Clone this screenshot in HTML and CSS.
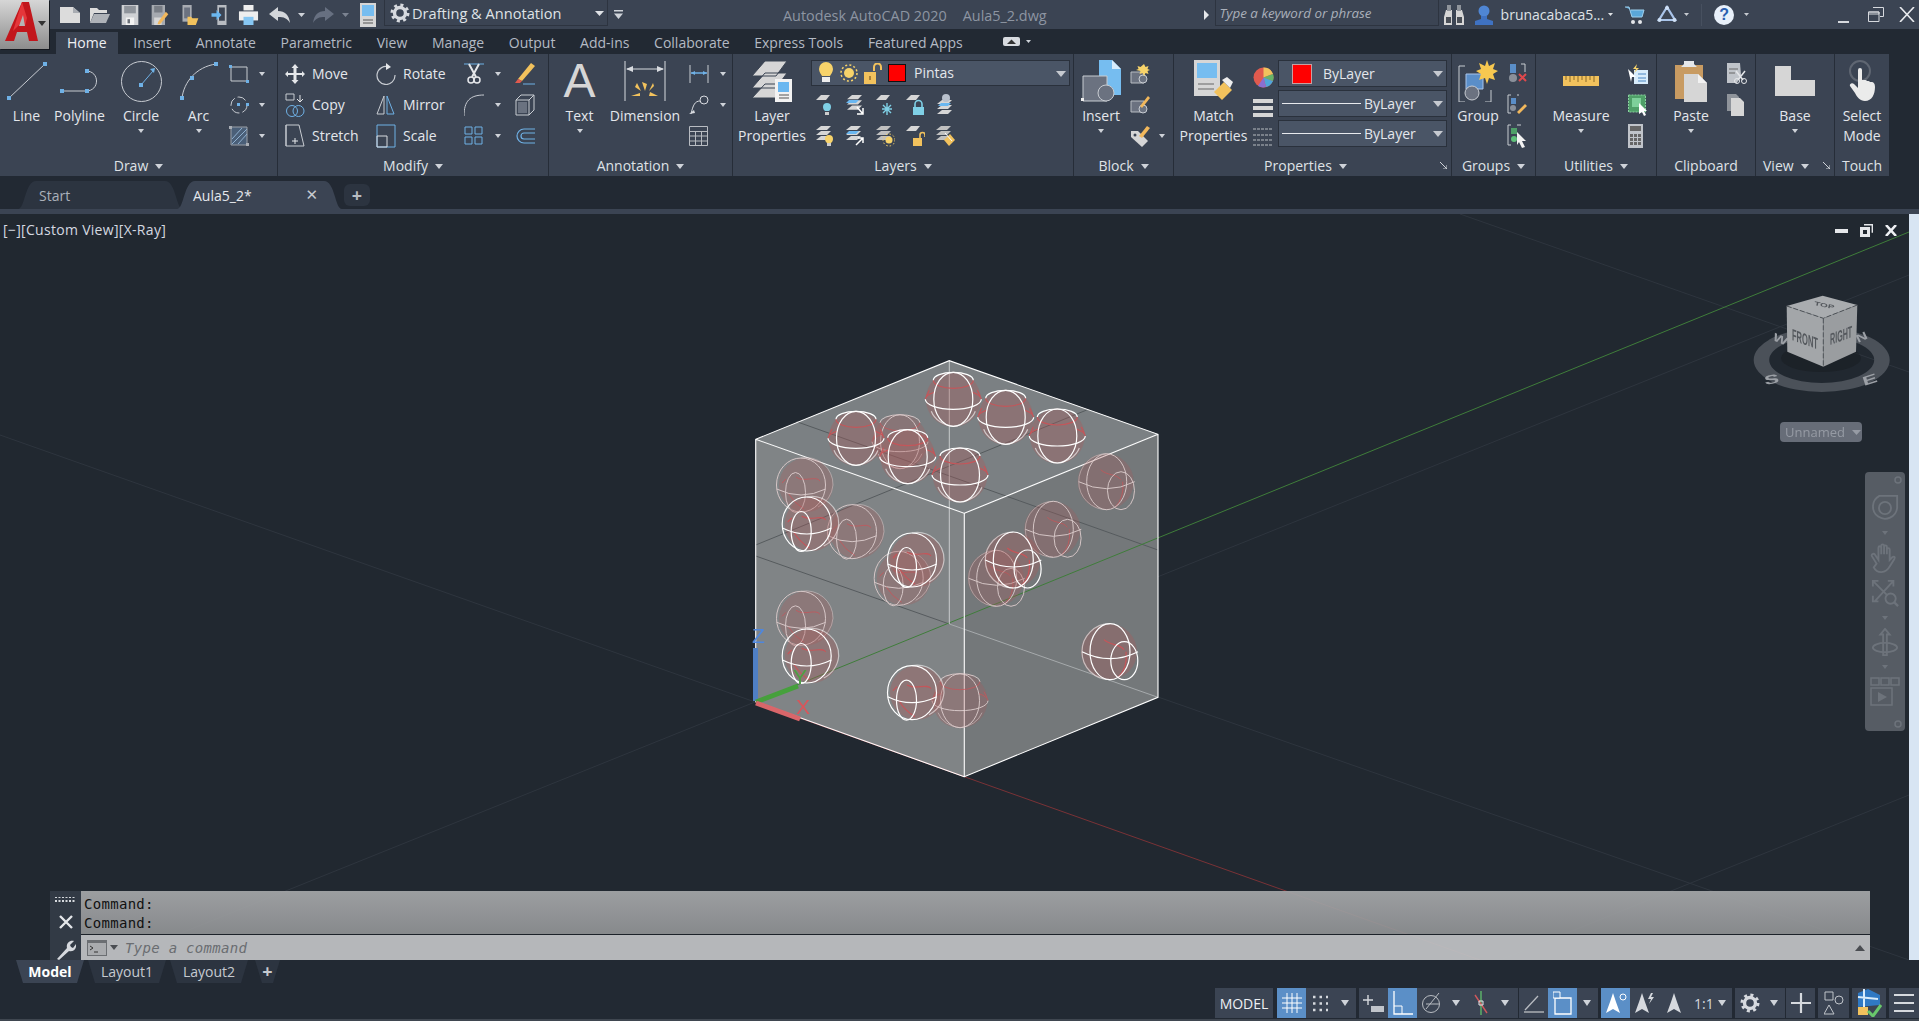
FILE: index.html
```html
<!DOCTYPE html>
<html lang="en">
<head>
    <meta charset="UTF-8">
    <title>Autodesk AutoCAD 2020 - Aula5_2.dwg</title>
    <link rel="stylesheet" href="styles.css">
</head>
<body>

    <svg class="defs" width="0" height="0">
        <defs>
            <g id="caret"><path d="M0 0h7l-3.5 4z" fill="#cfd3d9"/></g>
            <g id="gear"><circle cx="10" cy="10" r="5.5" fill="none" stroke="currentColor" stroke-width="3.4"/><circle cx="10" cy="10" r="8" fill="none" stroke="currentColor" stroke-width="3" stroke-dasharray="3 3.3"/></g>
            <g id="layer-sheet"><path d="M5 0h9l-4 5H0z"/></g>
            <g id="stack"><path d="M5 0h10l-4 4H0zM5 5h10l-4 4H0zM5 10h10l-4 4H0z"/></g>

            <g id="sph-top" fill="none">
                <circle r="27.5" fill="#aa5a5a" fill-opacity=".34" stroke="none"/>
                <path d="M-28 0A28 10 0 0 1 -19 -7M19 -7A28 10 0 0 1 28 0" stroke="#c4565a"/>
                <path d="M-20 -19A20 8 0 0 0 20 -19M-24 -9L-27 -3M24 -9L27 -3" stroke="#c4565a"/>
                <path d="M-28 0A28 10 0 0 0 28 0M-20 -19A20 8 0 0 1 20 -19"/>
                <ellipse rx="19.5" ry="27"/>
                <path d="M-22 12A26 22 0 0 0 0 27 26 22 0 0 0 22 12" opacity=".6"/>
            </g>
            <g id="sph-left" fill="none">
                <circle cx="2" r="27" fill="#aa5a5a" fill-opacity=".34" stroke="none"/>
                <path d="M-18 -6L-22 -2M-8 -8C0 -2 12 -10 16 -4M-16 8Q-10 18 0 24" stroke="#c4565a"/>
                <ellipse cx="-3" rx="24.5" ry="27"/>
                <ellipse cx="-8.5" cy="7.500" rx="10" ry="20"/>
                <path d="M-27.300 4Q-3 16 21.700 4"/>
                <path d="M-3 -27A27 27 0 0 1 29 0 27 27 0 0 1 14 22" opacity=".55"/>
            </g>
            <g id="sph-right" fill="none">
                <circle cx="-1" r="28" fill="#aa5a5a" fill-opacity=".34" stroke="none"/>
                <path d="M-6 -12C0 -6 10 -8 14 -2M8 26Q18 16 16 0" stroke="#c4565a"/>
                <ellipse rx="20" ry="28"/>
                <ellipse cx="14.300" cy="9" rx="13.500" ry="19"/>
                <path d="M-28 0Q0 14 28 0"/>
                <path d="M0 -28A28 28 0 0 0 -28 0 28 28 0 0 0 0 28" opacity=".55"/>
            </g>
        </defs>
    </svg>

    <a class="app-btn" href="#">
        <svg width="36" height="42" viewBox="0 0 36 42"><path d="M18 1h7l9 39h-9l-2-9H13l-3 9H1z" fill="#c2161c"/><path d="M18 1l-9 29 8-8 4 3 2-8z" fill="#e5363a"/><path d="M19 14l-4 11h6z" fill="#b5b5b5"/></svg>
        <span class="app-caret"></span>
    </a>

    <header class="titlebar">
        <div class="qa">
            <svg width="20" height="20" viewBox="0 0 20 20"><path d="M0 2h13l7 6v10H0z" fill="#dcdcdc"/><path d="M13 2v6h7" fill="#a9adb3"/></svg>
            <svg width="20" height="20" viewBox="0 0 20 20"><path d="M0 3h7l2 2h8v3H4L0 18z" fill="#dcdcdc"/><path d="M4 9h16l-4 9H0z" fill="#aeb2b8"/></svg>
            <svg width="20" height="20" viewBox="0 0 20 24"><path d="M0 0h20v24H0z" fill="#cfd1d4"/><path d="M3 1h14v9H3z" fill="#8f949b"/><path d="M5 15h10v9H5z" fill="#f2f2f2"/><path d="M7 17h3v5H7z" fill="#6b7078"/></svg>
            <svg width="20" height="20" viewBox="0 0 20 24"><path d="M0 0h16v24H0z" fill="#a6aab0"/><path d="M3 1h10v8H3z" fill="#787d85"/><path d="M3 15h9v9H3z" fill="#d6d6d6"/><path d="M8 20L17 8l3 3-10 12H7z" fill="#f2b85c"/></svg>
            <svg width="20" height="20" viewBox="0 0 20 24"><path d="M1 0h11v20H1z" fill="#a8acb2"/><path d="M3 3h7v13H3z" fill="#6b7280"/><path d="M7 14h4l2 2h7l-3 8H7z" fill="#f2c25d"/></svg>
            <svg width="18" height="20" viewBox="0 0 18 24"><path d="M7 0h11v24H7zM9 3v16h7V3z" fill="#b8bcc2"/><path d="M0 10h6V6l6 6-6 6v-4H0z" fill="#6ab7f0"/></svg>
            <svg width="21" height="20" viewBox="0 0 21 22"><path d="M5 0h11v6H5z" fill="#eee"/><path d="M0 7h21v10H0z" fill="#eee"/><path d="M5 13h11v9H5z" fill="#86c6f2"/></svg>
            <svg width="21" height="18" viewBox="0 0 21 18"><path d="M0 8l9-7v4c7 0 11 4 12 12-3-5-6-6-12-6v4z" fill="#d3d6da"/></svg>
            <svg class="tiny" width="7" height="4"><use href="#caret"/></svg>
            <svg class="redo" width="21" height="18" viewBox="0 0 21 18"><path d="M21 8l-9-7v4C5 5 1 9 0 17c3-5 6-6 12-6v4z" fill="#677081"/></svg>
            <svg class="tiny" width="7" height="4"><path d="M0 0h7l-3.500 4z" fill="#7b8391"/></svg>
            <svg class="plot" width="16" height="24" viewBox="0 0 16 24"><path d="M0 0h16v24H0z" fill="#d6d6d6"/><path d="M2 2h12v11H2z" fill="#76bdf0"/><path d="M3 17h10M3 20h10" stroke="#555"/></svg>
        </div>
        <div class="workspace">
            <svg class="ws-gear" width="20" height="20" viewBox="0 0 20 20"><use href="#gear"/></svg>
            <span>Drafting &amp; Annotation</span>
            <svg class="ws-caret" width="9" height="5"><path d="M0 0h9L4.500 5z" fill="#dfe2e6"/></svg>
        </div>
        <svg class="ws-more" width="9" height="9"><path d="M0 0h9v1.500H0z M0 3.500h9L4.500 9z" fill="#cfd3d9"/></svg>
        <div class="app-title"><span>Autodesk AutoCAD 2020</span><span>Aula5_2.dwg</span></div>
        <svg class="search-arrow" width="5" height="10"><path d="M0 0l5 5-5 5z" fill="#e5e7ea"/></svg>
        <div class="search">Type a keyword or phrase</div>
        <div class="user-tools">
            <svg width="20" height="20" viewBox="0 0 20 20"><path d="M2 5h6v15H0v-8zM12 5h6l2 7v8h-8z" fill="#d6d6d6"/><path d="M3 0h4v6H3zM13 0h4v6h-4z" fill="#8f949b"/><path d="M2 12h5v6H2zM13 12h5v6h-5z" fill="#4a4f57"/></svg>
            <svg class="user-ico" width="20" height="20" viewBox="0 0 20 20"><circle cx="10" cy="6" r="5.500" fill="#4f86d4"/><path d="M7 11h6v3l6 2v4H1v-4l6-2z" fill="#3f72c2"/></svg>
            <span class="user-name">brunacabaca5...</span>
            <svg class="caret" width="5" height="3"><path d="M0 0h5L2.500 3z" fill="#dfe2e6"/></svg>
            <svg class="cart" width="20" height="20" viewBox="0 0 20 20"><path d="M0 2h4l3 10h10l2-7H6" fill="#5aa7d9" stroke="#9fd0ee"/><circle cx="8" cy="17" r="2" fill="#e5e7ea"/><circle cx="15" cy="17" r="2" fill="#e5e7ea"/></svg>
            <svg class="a360" width="20" height="20" viewBox="0 0 20 20"><path d="M10 2L2 15h16z" fill="none" stroke="#a9c4ea" stroke-width="2.200"/><circle cx="10" cy="3" r="2" fill="#cfe0f5"/><circle cx="2.500" cy="15" r="2" fill="#cfe0f5"/><circle cx="17.500" cy="15" r="2" fill="#cfe0f5"/></svg>
            <svg class="caret" width="5" height="3"><path d="M0 0h5L2.500 3z" fill="#c6cad0"/></svg>
            <span class="tool-sep"></span>
            <span class="help">?</span>
            <svg class="caret" width="5" height="3"><path d="M0 0h5L2.500 3z" fill="#c6cad0"/></svg>
        </div>
        <div class="win-btns">
            <svg class="win-min" width="11" height="16"><path d="M0 14h11v2H0z" fill="#d6d9de"/></svg>
            <svg width="16" height="15" viewBox="0 0 16 15"><path d="M5 .5h10.500v9H12M.5 5h10.500v9.500H.5z M.5 5h10.500v2H.5z" fill="none" stroke="#d6d9de"/></svg>
            <svg width="16" height="15" viewBox="0 0 16 15"><path d="M1 0l14 15M15 0L1 15" stroke="#e8eaee" stroke-width="1.600"/></svg>
        </div>
    </header>

    <nav class="ribbon-tabs">
        <a class="active" href="#">Home</a>
        <a href="#">Insert</a>
        <a href="#">Annotate</a>
        <a href="#">Parametric</a>
        <a href="#">View</a>
        <a href="#">Manage</a>
        <a href="#">Output</a>
        <a href="#">Add-ins</a>
        <a href="#">Collaborate</a>
        <a href="#">Express Tools</a>
        <a href="#">Featured Apps</a>
        <span class="tab-opt">
            <svg width="17" height="9"><rect width="17" height="9" rx="2" fill="#d8dbe0"/><path d="M4 7l4.500-4.500L13 7z" fill="#333"/></svg>
            <svg width="5" height="3"><path d="M0 0h5L2.500 3z" fill="#cfd3d9"/></svg>
        </span>
    </nav>

    <section class="ribbon">

        <!-- Draw -->
        <div class="panel p-draw">
            <div class="panel-body">
                <div class="big">
                    <div class="big-ico"><svg width="40" height="38" viewBox="0 0 40 38"><path d="M2 36L38 2" stroke="#c8ccd2"/><path d="M0 34h4v4H0zM36 0h4v4h-4z" fill="#6fb1e6"/></svg></div>
                    <span>Line</span>
                </div>
                <div class="big">
                    <div class="big-ico"><svg width="40" height="24" viewBox="0 0 40 24"><path d="M2 22h26M26 2c14 0 14 20 0 20" fill="none" stroke="#c8ccd2"/><path d="M0 20h4v4H0zM25 20h4v4h-4zM25 0h4v4h-4z" fill="#6fb1e6"/></svg></div>
                    <span>Polyline</span>
                </div>
                <div class="big">
                    <div class="big-ico"><svg width="41" height="41" viewBox="0 0 41 41"><circle cx="20.500" cy="20.500" r="20" fill="none" stroke="#c8ccd2"/><path d="M20 24L32 10" stroke="#6fb1e6"/><path d="M18 22h4v4h-4zM29 8l5-1-1 5z" fill="#6fb1e6"/></svg></div>
                    <span>Circle</span>
                    <i class="arr"></i>
                </div>
                <div class="big">
                    <div class="big-ico"><svg width="38" height="38" viewBox="0 0 38 38"><path d="M2 36C4 20 16 5 36 2" fill="none" stroke="#c8ccd2"/><path d="M0 34h4v4H0zM10 14h4v4h-4zM34 0h4v4h-4z" fill="#6fb1e6"/></svg></div>
                    <span>Arc</span>
                    <i class="arr"></i>
                </div>
                <div class="rows">
                    <div class="tool"><svg width="20" height="18" viewBox="0 0 20 18"><path d="M2 2h16v14H2z" fill="none" stroke="#c8ccd2"/><path d="M0 0h3v3H0zM17 15h3v3h-3z" fill="#6fb1e6"/></svg><i class="arr sm"></i></div>
                    <div class="tool"><svg width="20" height="20" viewBox="0 0 20 20"><circle cx="10" cy="10" r="8" fill="none" stroke="#c8ccd2" stroke-dasharray="9 3"/><path d="M8 8h3v3H8zM17 8h3v3h-3z" fill="#6fb1e6"/></svg><i class="arr sm"></i></div>
                    <div class="tool"><svg width="20" height="20" viewBox="0 0 20 20"><path d="M2 1h16v18H2z" fill="#4a5f78" stroke="#9aa0a8"/><path d="M3 13L13 2M3 18L18 3M9 18L18 8" stroke="#8fb0d0"/><path d="M0 0h3v3H0zM17 17h3v3h-3z" fill="#a9aeb5"/></svg><i class="arr sm"></i></div>
                </div>
            </div>
            <div class="panel-title">Draw <i class="arr title-arr"></i></div>
        </div>

        <!-- Modify -->
        <div class="panel p-modify">
            <div class="panel-body">
                <div class="tool"><svg width="20" height="22" viewBox="0 0 20 22"><path d="M10 1l3.500 4H11.500v5H17V8l3 3-3 3v-2h-5.500v5H13.500L10 21l-3.500-4H8.500v-5H3v2l-3-3 3-3v2h5.500V5H6.500z" fill="#e5e7ea"/></svg><span>Move</span></div>
                <div class="tool"><svg width="20" height="22" viewBox="0 0 20 22"><path d="M13 4A9 9 0 1 0 19 12" fill="none" stroke="#c8ccd2" stroke-width="1.200"/><path d="M10 0l5 4-5 3z" fill="#e5e7ea"/></svg><span>Rotate</span></div>
                <div class="tool"><svg width="20" height="22" viewBox="0 0 20 22"><path d="M0 1h20" stroke="#6fb1e6"/><path d="M5 1l7 13M15 1L8 14" stroke="#e5e7ea" stroke-width="2"/><circle cx="7" cy="17" r="3" fill="none" stroke="#e5e7ea" stroke-width="1.500"/><circle cx="13" cy="17" r="3" fill="none" stroke="#e5e7ea" stroke-width="1.500"/></svg><i class="arr sm"></i></div>
                <div class="tool"><svg width="20" height="24" viewBox="0 0 20 24"><path d="M3 17L16 1l4 3L7 19z" fill="#f2c25d"/><path d="M3 17l4 2-2 2H0z" fill="#e05a4e"/><path d="M8 22h12" stroke="#6fb1e6"/></svg></div>

                <div class="tool"><svg width="20" height="24" viewBox="0 0 20 24"><path d="M1 1h8v6H1z" fill="none" stroke="#c8ccd2"/><path d="M15 2v6M12 6l3 3 3-3" fill="none" stroke="#e5e7ea"/><circle cx="7" cy="18" r="5.500" fill="none" stroke="#6fb1e6"/><circle cx="13.500" cy="18" r="5.500" fill="none" stroke="#6fb1e6"/></svg><span>Copy</span></div>
                <div class="tool"><svg width="20" height="24" viewBox="0 0 20 24"><path d="M8 3L1 21h7z" fill="none" stroke="#c8ccd2"/><path d="M11 3l7 18h-7z" fill="none" stroke="#6fb1e6"/></svg><span>Mirror</span></div>
                <div class="tool"><svg width="20" height="24" viewBox="0 0 20 24"><path d="M0 23C0 8 6 2 20 2" fill="none" stroke="#c8ccd2"/></svg><i class="arr sm"></i></div>
                <div class="tool"><svg width="20" height="22" viewBox="0 0 20 22"><path d="M1 6h13v15H1zM1 6l5-5h13v15l-5 5M14 6l5-5" fill="none" stroke="#c8ccd2"/><path d="M3 8h9v11H3z" fill="#6a7280"/></svg></div>

                <div class="tool"><svg width="20" height="24" viewBox="0 0 20 24"><path d="M1 1h13l5 21H1zM1 1v21" fill="none" stroke="#c8ccd2"/><path d="M7 17h6M10 14v6" stroke="#e5e7ea"/></svg><span>Stretch</span></div>
                <div class="tool"><svg width="20" height="24" viewBox="0 0 20 24"><path d="M1 1h18v22H1z" fill="none" stroke="#6fb1e6"/><path d="M1 12h10v11H1z" fill="none" stroke="#d8dbe0"/></svg><span>Scale</span></div>
                <div class="tool"><svg width="20" height="20" viewBox="0 0 20 20"><path d="M1 1h7v7H1zM11 1h7v7h-7zM1 11h7v7H1zM11 11h7v7h-7z" fill="none" stroke="#6fb1e6"/></svg><i class="arr sm"></i></div>
                <div class="tool"><svg width="20" height="18" viewBox="0 0 20 18"><path d="M20 2H9a7 7 0 0 0 0 14h11M20 6H9a3 3 0 0 0 0 6h11" fill="none" stroke="#6fb1e6" stroke-width="1.200"/></svg></div>
            </div>
            <div class="panel-title">Modify <i class="arr title-arr"></i></div>
        </div>

        <!-- Annotation -->
        <div class="panel p-anno">
            <div class="panel-body">
                <div class="big">
                    <div class="big-ico"><span class="text-a">A</span></div>
                    <span>Text</span>
                    <i class="arr"></i>
                </div>
                <div class="big">
                    <div class="big-ico"><svg width="42" height="40" viewBox="0 0 42 40"><path d="M1 0v40M41 0v40M3 8h36" stroke="#d8dbe0"/><path d="M2 8l7-3v6zM40 8l-7-3v6z" fill="#d8dbe0"/><path d="M16 35h-9l9-3zM25 35h9l-8-4zM21 30l-3-9 5 2zM13 22l4 8-6-4zM29 22l-4 8 5-5z" fill="#f2c25d"/></svg></div>
                    <span>Dimension</span>
                </div>
                <div class="rows">
                    <div class="tool"><svg width="20" height="20" viewBox="0 0 20 20"><path d="M1 1v18M19 1v18" stroke="#c8ccd2"/><path d="M2 9h16" stroke="#6fb1e6" stroke-width="1.500"/><path d="M2 9l4-2v4zM18 9l-4-2v4z" fill="#6fb1e6"/></svg><i class="arr sm"></i></div>
                    <div class="tool"><svg width="20" height="20" viewBox="0 0 20 20"><circle cx="15" cy="5" r="4" fill="none" stroke="#d8dbe0"/><path d="M11 6C6 6 4 10 2 19" fill="none" stroke="#d8dbe0"/><path d="M0 19l5-4 1 3z" fill="#d8dbe0"/></svg><i class="arr sm"></i></div>
                    <div class="tool"><svg width="19" height="20" viewBox="0 0 19 20"><path d="M.5.5h18v19H.5z M.5 5.500h18M.5 10h18M.5 15h18M6.500 5.500v14M12.500 5.500v14" fill="none" stroke="#b8bcc2"/></svg></div>
                </div>
            </div>
            <div class="panel-title">Annotation <i class="arr title-arr"></i></div>
        </div>

        <!-- Layers -->
        <div class="panel p-layers">
            <div class="panel-body">
                <div class="big two">
                    <div class="big-ico"><svg width="40" height="42" viewBox="0 0 40 42"><path d="M13 1h22L24 16H0z M13 13h22L24 28H0zM13 24h14v14H0z" fill="#d6d6d6" stroke="#3b4453"/><path d="M23 19h17v23H23z" fill="#f2f2f2"/><path d="M26 22h11v10H26z" fill="#6ab7f0"/><path d="M27 35h10M27 38h10" stroke="#555"/></svg></div>
                    <span>Layer</span>
                    <span>Properties</span>
                </div>
                <div class="layer-col">
                    <div class="combo layer-combo">
                        <svg width="14" height="22" viewBox="0 0 14 22"><path d="M7 0a7 7 0 0 1 7 7c0 3-2 5-3 7H3C2 12 0 10 0 7a7 7 0 0 1 7-7z" fill="#f7d36a"/><path d="M3 15h8v5H3z" fill="#eee"/></svg>
                        <svg width="18" height="18" viewBox="0 0 18 18"><circle cx="9" cy="9" r="5" fill="#f7d36a"/><circle cx="9" cy="9" r="8" fill="none" stroke="#f7d36a" stroke-width="1.500" stroke-dasharray="2 2.200"/></svg>
                        <svg width="18" height="21" viewBox="0 0 18 21"><path d="M0 9h12v12H0z" fill="#f2c25d"/><path d="M10 8V4a3.500 3.500 0 0 1 7 0v3" fill="none" stroke="#f2c25d" stroke-width="2"/><path d="M5 13h2v4H5z" fill="#a8813a"/></svg>
                        <span class="swatch red"></span>
                        <span class="combo-text">Pintas</span>
                        <i class="combo-arr"></i>
                    </div>
                    <div class="icon-row">
                        <svg width="20" height="20" viewBox="0 0 20 20"><g fill="#d6d6d6"><use href="#layer-sheet" transform="translate(1 0)"/></g><path d="M12 8a4 4 0 0 1 4 4c0 2-1 3-2 4h-4c-1-1-2-2-2-4a4 4 0 0 1 4-4z" fill="#7fd0e6"/><path d="M10 17h4v3h-4z" fill="#ccc"/></svg>
                        <svg width="20" height="22" viewBox="0 0 20 22"><g fill="#d6d6d6"><use href="#stack" transform="translate(2 1) scale(1 1.050)"/></g><path d="M4 6h10l-3 3H1z" fill="#6ab7f0"/><path d="M12 13l6 7M18 14v6h-6" fill="none" stroke="#fff" stroke-width="1.500"/></svg>
                        <svg width="20" height="20" viewBox="0 0 20 20"><g fill="#d6d6d6"><use href="#layer-sheet" transform="translate(1 0)"/></g><path d="M12 8v12M7 14h10M8 10l8 8M16 10l-8 8" stroke="#7fd0e6" stroke-width="1.400"/></svg>
                        <svg width="20" height="20" viewBox="0 0 20 20"><g fill="#d6d6d6"><use href="#layer-sheet" transform="translate(1 0)"/></g><path d="M8 12h11v8H8z" fill="#7fd0e6"/><path d="M10 12V9a3.500 3.500 0 0 1 7 0v3" fill="none" stroke="#7fd0e6" stroke-width="1.600"/></svg>
                        <svg width="20" height="21" viewBox="0 0 20 21"><g fill="#d6d6d6"><use href="#stack" transform="translate(2 6)"/></g><circle cx="11" cy="4" r="4" fill="#b8c0cc"/><path d="M6 9h10l-3 3H3z" fill="#6ab7f0"/></svg>
                    </div>
                    <div class="icon-row">
                        <svg width="20" height="20" viewBox="0 0 20 20"><g fill="#d6d6d6"><use href="#stack" transform="translate(1 0)"/></g><path d="M14 9a4 4 0 0 1 4 4c0 2-1 3-2 4h-4c-1-1-2-2-2-4a4 4 0 0 1 4-4z" fill="#f7d36a"/><path d="M12 17h4v3h-4z" fill="#ccc"/></svg>
                        <svg width="20" height="22" viewBox="0 0 20 22"><g fill="#d6d6d6"><use href="#stack" transform="translate(1 1)"/></g><path d="M4 6h10l-3 3H1z" fill="#6ab7f0"/><path d="M11 20l7-7M13 13h5v5" fill="none" stroke="#fff" stroke-width="1.500"/></svg>
                        <svg width="20" height="22" viewBox="0 0 20 22"><g fill="#c0c0c0"><use href="#stack" transform="translate(1 1)"/></g><circle cx="14" cy="15" r="3.500" fill="#f7d36a"/><circle cx="14" cy="15" r="6" fill="none" stroke="#f7d36a" stroke-dasharray="1.500 2"/></svg>
                        <svg width="20" height="20" viewBox="0 0 20 20"><g fill="#d6d6d6"><use href="#layer-sheet" transform="translate(1 0)"/></g><path d="M8 12h9v8H8z" fill="#f2c25d"/><path d="M15 12V9a2.500 2.500 0 0 1 5 0v2" fill="none" stroke="#f2c25d" stroke-width="1.600"/></svg>
                        <svg width="20" height="22" viewBox="0 0 20 22"><g fill="#c0c0c0"><use href="#stack" transform="translate(1 1)"/></g><path d="M9 15l6-6 5 6-6 6z" fill="#f2c25d"/><path d="M10 8l7 8" stroke="#fff"/></svg>
                    </div>
                </div>
            </div>
            <div class="panel-title">Layers <i class="arr title-arr"></i></div>
        </div>

        <!-- Block -->
        <div class="panel p-block">
            <div class="panel-body">
                <div class="big">
                    <div class="big-ico"><svg width="40" height="42" viewBox="0 0 40 42"><path d="M18 0h13l9 9v26H18z" fill="#76bdf0"/><path d="M31 0l9 9h-9z" fill="#d8ecfb"/><path d="M2 16h24v25H2z" fill="#6b7280" stroke="#c8ccd2"/><circle cx="25" cy="33" r="8" fill="#6b7280" stroke="#c8ccd2"/><path d="M0 38h3v3H0z" fill="#eee"/></svg></div>
                    <span>Insert</span>
                    <i class="arr"></i>
                </div>
                <div class="rows block-rows">
                    <div class="tool"><svg width="20" height="20" viewBox="0 0 20 20"><path d="M1 8h13v11H1z" fill="#6b7280" stroke="#b8bcc2"/><circle cx="13" cy="15" r="4" fill="#6b7280" stroke="#c8ccd2"/><path d="M14 0l1.500 3 3-1-1 3 2.500 1-2.500 1 1 3-3-1-1.500 3-1.500-3-3 1 1-3L6 6l2.500-1-1-3 3 1z" fill="#f7d36a"/></svg></div>
                    <div class="tool"><svg width="20" height="20" viewBox="0 0 20 20"><path d="M1 6h13v11H1z" fill="#6b7280" stroke="#b8bcc2"/><circle cx="13" cy="14" r="4" fill="#6b7280" stroke="#c8ccd2"/><path d="M10 11L18 1l2 2-8 10z" fill="#f2b85c"/></svg></div>
                    <div class="tool"><svg width="20" height="24" viewBox="0 0 20 24"><path d="M1 7h7l10 10-6 6L1 13z" fill="#d6d6d6"/><circle cx="5" cy="11" r="1.500" fill="#3b4453"/><path d="M9 12L17 2l3 2-8 10z" fill="#f2b85c"/></svg><i class="arr sm"></i></div>
                </div>
            </div>
            <div class="panel-title">Block <i class="arr title-arr"></i></div>
        </div>

        <!-- Properties -->
        <div class="panel p-props">
            <div class="panel-body">
                <div class="big two">
                    <div class="big-ico"><svg width="40" height="42" viewBox="0 0 40 42"><path d="M0 0h26v36H0z" fill="#d6d6d6"/><path d="M3 3h20v15H3z" fill="#76bdf0"/><path d="M4 24h16M4 29h16" stroke="#666"/><path d="M20 32l10-10 8 8-10 10z" fill="#f2c25d"/><path d="M28 20l5-3 6 5-3 6z" fill="#eee"/></svg></div>
                    <span>Match</span>
                    <span>Properties</span>
                </div>
                <div class="prop-icons">
                    <svg width="21" height="21" viewBox="0 0 21 21"><circle cx="10.500" cy="10.500" r="10" fill="#e05a4e"/><path d="M10.500 10.500L20 7A10 10 0 0 0 10.500.5z" fill="#f2c25d"/><path d="M10.500 10.500L20 14a10 10 0 0 0 0-7z" fill="#67b468"/><path d="M10.500 10.500L13 20a10 10 0 0 0 7-6z" fill="#4fa6d9"/><path d="M10.500 10.500L5 19a10 10 0 0 0 8 1z" fill="#8a6fd1"/></svg>
                    <svg width="20" height="18" viewBox="0 0 20 18"><path d="M0 0h20v4H0zM0 7h20v4H0zM0 14h20v4H0z" fill="#d6d6d6"/></svg>
                    <svg width="20" height="18" viewBox="0 0 20 18"><path d="M0 1h20M0 7h20M0 12h20M0 17h20" stroke="#b8bcc2" stroke-dasharray="3 1"/></svg>
                </div>
                <div class="prop-combos">
                    <div class="combo"><span class="swatch red wide"></span><span class="combo-text">ByLayer</span><i class="combo-arr"></i></div>
                    <div class="combo"><span class="combo-line"></span><span class="combo-text">ByLayer</span><i class="combo-arr"></i></div>
                    <div class="combo"><span class="combo-line"></span><span class="combo-text">ByLayer</span><i class="combo-arr"></i></div>
                </div>
            </div>
            <div class="panel-title">Properties <i class="arr title-arr"></i><svg class="launch" width="7" height="7"><path d="M0 0l7 7M3 7h4V3" fill="none" stroke="#cfd3d9"/></svg></div>
        </div>

        <!-- Groups -->
        <div class="panel p-groups">
            <div class="panel-body">
                <div class="big">
                    <div class="big-ico"><svg width="40" height="42" viewBox="0 0 40 42"><path d="M7 6H1v36h6M27 42h6V30" fill="none" stroke="#c8ccd2"/><path d="M8 14h17v15H8z" fill="#5a8ec8" stroke="#a9c4ea"/><circle cx="14" cy="33" r="7" fill="#6b7280" stroke="#c8ccd2"/><path d="M29 0l2 6 6-3-2 6 5 2-5 3 2 6-6-2-2 6-2-6-6 2 2-6-5-3 5-2-2-6 6 3z" fill="#f7c850"/></svg></div>
                    <span>Group</span>
                </div>
                <div class="rows">
                    <div class="tool"><svg width="20" height="22" viewBox="0 0 20 22"><path d="M3 1h6v9H3z" fill="#5a8ec8"/><circle cx="6" cy="15" r="4" fill="#8a909a"/><path d="M12 11l7 7M19 11l-7 7" stroke="#e0484c" stroke-width="2"/><path d="M14 1h4v8" fill="none" stroke="#c8ccd2"/></svg></div>
                    <div class="tool"><svg width="20" height="22" viewBox="0 0 20 22"><path d="M4 1H1v18h3M12 1h-2" fill="none" stroke="#c8ccd2"/><path d="M4 4h5v6H4z" fill="#5a8ec8"/><circle cx="6" cy="14" r="3" fill="#8a909a"/><path d="M10 18l8-8 2 2-8 8z" fill="#f2b85c"/></svg></div>
                    <div class="tool"><svg width="20" height="24" viewBox="0 0 20 24"><path d="M4 1H1v20h3M10 1h4" fill="none" stroke="#c8ccd2"/><path d="M4 4h6v6H4z" fill="#4fa068"/><circle cx="7" cy="15" r="3" fill="#5fc07a"/><path d="M10 8l9 9-4 0 3 6-3 1-3-6-2 3z" fill="#f2f2f2"/></svg></div>
                </div>
            </div>
            <div class="panel-title">Groups <i class="arr title-arr"></i></div>
        </div>

        <!-- Utilities -->
        <div class="panel p-utils">
            <div class="panel-body">
                <div class="big">
                    <div class="big-ico"><svg width="36" height="10" viewBox="0 0 36 10"><path d="M0 0h36v10H0z" fill="#f2c25d"/><path d="M3 0v4M7 0v6M11 0v4M15 0v6M19 0v4M23 0v6M27 0v4M31 0v6" stroke="#8a6a2a"/></svg></div>
                    <span>Measure</span>
                    <i class="arr"></i>
                </div>
                <div class="rows">
                    <div class="tool"><svg width="20" height="20" viewBox="0 0 20 20"><path d="M6 6h14v14H6z" fill="#d8ecfb"/><path d="M10 10h8M10 14h8M10 17h8" stroke="#4a86c2"/><path d="M0 5l8 8-4 0-1 5z" fill="#fff"/><path d="M9 0L5 5h3L6 9l5-5H8z" fill="#f7d36a"/></svg></div>
                    <div class="tool"><svg width="20" height="22" viewBox="0 0 20 22"><path d="M.5 1h17v17H.5z" fill="#4fa068" stroke="#8ad0a0" stroke-dasharray="2 1"/><path d="M4 4h9v9H4z" fill="#7ed09a"/><path d="M11 9l8 8-3 0 2 4-2 1-2-4-3 2z" fill="#fff"/></svg></div>
                    <div class="tool"><svg width="15" height="24" viewBox="0 0 15 24"><path d="M0 0h15v24H0z" fill="#c0c4ca"/><path d="M2 2h11v5H2z" fill="#666"/><path d="M2 10h3v3H2zM6 10h3v3H6zM10 10h3v3h-3zM2 14h3v3H2zM6 14h3v3H6zM10 14h3v3h-3zM2 18h3v3H2zM6 18h3v3H6zM10 18h3v3h-3z" fill="#666"/></svg></div>
                </div>
            </div>
            <div class="panel-title">Utilities <i class="arr title-arr"></i></div>
        </div>

        <!-- Clipboard -->
        <div class="panel p-clip">
            <div class="panel-body">
                <div class="big">
                    <div class="big-ico"><svg width="32" height="42" viewBox="0 0 32 42"><path d="M0 5h28v34H0z" fill="#c89b62"/><path d="M9 1h10v3l3 3H6l3-3z" fill="#e5e7ea"/><path d="M9 14h14l9 9v19H9z" fill="#d6d6d6"/><path d="M23 14l9 9h-9z" fill="#f2f2f2"/></svg></div>
                    <span>Paste</span>
                    <i class="arr"></i>
                </div>
                <div class="rows">
                    <div class="tool"><svg width="20" height="22" viewBox="0 0 20 22"><path d="M0 0h13l1 12-4 8H0z" fill="#c0c4ca"/><path d="M2 6h9M2 10h6" stroke="#666"/><path d="M9 8l7 9M18 8l-7 9" stroke="#e5e7ea" stroke-width="1.500"/><circle cx="10" cy="18" r="2.500" fill="none" stroke="#e5e7ea"/><circle cx="17" cy="18" r="2.500" fill="none" stroke="#e5e7ea"/></svg></div>
                    <div class="tool"><svg width="17" height="22" viewBox="0 0 17 22"><path d="M0 0h9l3 3v14H0z" fill="#8f949b"/><path d="M4 4h9l4 4v14H4z" fill="#d6d6d6"/></svg></div>
                </div>
            </div>
            <div class="panel-title">Clipboard</div>
        </div>

        <!-- View -->
        <div class="panel p-view">
            <div class="panel-body">
                <div class="big">
                    <div class="big-ico"><svg width="40" height="30" viewBox="0 0 40 30"><path d="M0 0h16v14h24v16H0z" fill="#d6d6d6"/></svg></div>
                    <span>Base</span>
                    <i class="arr"></i>
                </div>
            </div>
            <div class="panel-title">View <i class="arr title-arr"></i><svg class="launch" width="7" height="7"><path d="M0 0l7 7M3 7h4V3" fill="none" stroke="#cfd3d9"/></svg></div>
        </div>

        <!-- Touch -->
        <div class="panel p-touch">
            <div class="panel-body">
                <div class="big two">
                    <div class="big-ico"><svg width="26" height="42" viewBox="0 0 26 42"><circle cx="11" cy="11" r="10" fill="none" stroke="#5f6672" stroke-width="2"/><path d="M9 10a2 2 0 0 1 4 0v10l3 0a2 2 0 0 1 2 1l1 0a2 2 0 0 1 2 1l1 0c3 0 4 2 4 5 0 7-3 14-10 14-5 0-8-4-10-8L1 26c-1-2 2-4 4-2l4 4z" fill="#ebebeb"/></svg></div>
                    <span>Select</span>
                    <span>Mode</span>
                </div>
            </div>
            <div class="panel-title">Touch</div>
        </div>
    </section>

    <div class="doc-tabs">
        <a class="doc-tab" href="#">Start</a>
        <a class="doc-tab current" href="#">Aula5_2*<span class="doc-close">&#10005;</span></a>
        <a class="doc-add" href="#">+</a>
    </div>
    <div class="doc-band"></div>

    <main class="workarea">
        <div class="canvas">
            <svg class="drawing" width="1909" height="746" viewBox="0 214 1909 746">
                <!-- background grid -->
                <g stroke="#2e353e" fill="none">
                    <path d="M0 435L755 702"/>
                    <path d="M1460 214L1909 372"/>
                    <path d="M755 702L0 1006"/>
                    <path d="M1100 600L1909 275"/>
                    <path d="M1158 697L1909 960"/>
                    <path d="M1500 960L1909 795"/>
                </g>
                <!-- cube -->
                <polygon points="949.300,360.700 1158,434.300 964.300,513.300 755.700,439.300" fill="#7b8083"/>
                <polygon points="755.700,439.300 964.300,513.300 964.300,776.700 755.700,701.700" fill="#808486"/>
                <polygon points="964.300,513.300 1158,434.300 1158,697.300 964.300,776.700" fill="#74787a"/>
                <g stroke="#565b5e" fill="none">
                    <path d="M796.700 421.700L1158 550"/>
                    <path d="M755.700 545L1086.700 410"/>
                    <path d="M755.700 556L949.300 624"/>
                </g>
                <path d="M949.300 624L1158 697.300" stroke="#a6aaac"/>
                <!-- axes -->
                <path d="M755 702L1909 232" stroke="#3f7d3a"/>
                <path d="M755 702L964.300 776.700" stroke="#b0555a"/>
                <path d="M964.300 776.700L1480 960" stroke="#7a3236"/>
                <!-- edges -->
                <path d="M949.300 360.700V624" stroke="#c8cbcc"/>
                <path d="M755.700 701.700V439.300L949.300 360.700 1158 434.300V697.300L964.300 776.700V513.300L755.700 439.300M964.300 513.300L1158 434.300M964.300 776.700L755.700 701.700" fill="none" stroke="#fff" stroke-width="1.100"/>
                <!-- spheres, back ones first -->
                <g class="sph-back">
                    <use href="#sph-top" x="900" y="441.700"/>
                    <use href="#sph-left" x="804" y="485"/>
                    <use href="#sph-left" x="855" y="531.700"/>
                    <use href="#sph-left" x="901.700" y="578.300"/>
                    <use href="#sph-left" x="804" y="618.300"/>
                    <use href="#sph-top" x="960" y="700.700"/>
                    <use href="#sph-right" x="996.700" y="578.300"/>
                    <use href="#sph-right" x="1053.300" y="529.300"/>
                    <use href="#sph-right" x="1106.700" y="481.700"/>
                </g>
                <g class="sph-front">
                    <use href="#sph-top" x="953.300" y="399.300"/>
                    <use href="#sph-top" x="1005.700" y="417.300"/>
                    <use href="#sph-top" x="1057.300" y="436"/>
                    <use href="#sph-top" x="856" y="438.300"/>
                    <use href="#sph-top" x="907.700" y="456.700"/>
                    <use href="#sph-top" x="960" y="475"/>
                    <use href="#sph-left" x="809.700" y="524"/>
                    <use href="#sph-left" x="915" y="560"/>
                    <use href="#sph-left" x="809.700" y="656"/>
                    <use href="#sph-left" x="915" y="692.700"/>
                    <use href="#sph-right" x="1013.300" y="560"/>
                    <use href="#sph-right" x="1110" y="651.700"/>
                </g>
                <!-- UCS icon -->
                <path d="M755.500 701V648" stroke="#4f7fc4" stroke-width="5"/>
                <path d="M756 702L798 686" stroke="#46a03c" stroke-width="5"/>
                <path d="M756 703L800 719" stroke="#d9666a" stroke-width="5"/>
                <text class="ucs z" x="752" y="643">Z</text>
                <text class="ucs y" x="793" y="684">Y</text>
                <text class="ucs x" x="796" y="714">X</text>
                <!-- view cube -->
                <path d="M1753.700 360a68 32 0 0 1 136 0a68 32 0 0 1 -136 0zM1769.200 360a52.500 23 0 0 0 105 0a52.500 23 0 0 0 -105 0z" fill="#4b5159"/>
                <ellipse cx="1821" cy="358" rx="40" ry="14" fill="#171b20" opacity=".5"/>
                <text class="compass" transform="translate(1765 385) rotate(-10) scale(1.400 .8)">S</text>
                <text class="compass" transform="translate(1864 386) rotate(-18) scale(1.400 .8)">E</text>
                <text class="compass" transform="translate(1772 340) rotate(22) scale(1 .7)">W</text>
                <text class="compass" transform="translate(1858 343) rotate(-25) scale(1 .7)">N</text>
                <polygon points="1822.700,295.700 1857.300,305 1823.300,318.300 1786.700,306" fill="#a9acaf"/>
                <polygon points="1786.700,306 1823.300,318.300 1823.300,366.700 1787.300,351.700" fill="#a3a6a9"/>
                <polygon points="1823.300,318.300 1857.300,305 1856,351.700 1823.300,366.700" fill="#9a9da0"/>
                <path d="M1786.700 306L1823.300 318.300 1857.300 305M1823.300 318.300V366.700" fill="none" stroke="#50555a" stroke-dasharray="5 2"/>
                <text class="vc-face" transform="translate(1792 340) skewY(20) scale(.58 1.250)">FRONT</text>
                <text class="vc-face" transform="translate(1830 345) skewY(-20) scale(.55 1.250)">RIGHT</text>
                <text class="vc-top" transform="translate(1814 305) rotate(12) scale(1 .55)">TOP</text>
            </svg>

            <div class="view-label">[&minus;][Custom View][X-Ray]</div>

            <div class="view-btns">
                <svg width="13" height="6"><path d="M0 1h13v4H0z" fill="#e5e7ea"/></svg>
                <svg width="13" height="13" viewBox="0 0 13 13"><path d="M4 .7h8.300v8" fill="none" stroke="#e5e7ea" stroke-width="1.400"/><path d="M0 3h10v10H0zM3 6v4h4V6z" fill="#e5e7ea" fill-rule="evenodd"/></svg>
                <svg width="12" height="11" viewBox="0 0 12 11"><path d="M1 0l10 11M11 0L1 11" stroke="#eef0f3" stroke-width="2.600"/></svg>
            </div>

            <div class="view-name">Unnamed <svg width="9" height="5"><path d="M0 0h9L4.500 5z" fill="#969ba4"/></svg></div>

            <div class="navbar">
                <svg class="nav-dot" width="8" height="8"><circle cx="4" cy="4" r="3" fill="none" stroke="#6d737b" stroke-width="1.500"/></svg>
                <svg class="nav-first" width="28" height="28" viewBox="0 0 30 30"><path d="M9 2h19v13A13 13 0 1 1 9 2z" fill="none" stroke="#6d737b" stroke-width="2"/><circle cx="15" cy="15" r="6.500" fill="none" stroke="#6d737b" stroke-width="2"/></svg>
                <i class="nav-arr"></i>
                <svg width="30" height="30" viewBox="0 0 30 32"><path d="M6 22L1 14c-1-2 2-3 3-2l4 6V5c0-2 3-2 3 0v7-9c0-2 3-2 3 0v9-8c0-2 3-2 3 0v8-5c0-2 3-2 3 0v11l3-3c2-1 3 0 2 2l-5 8c-2 4-4 6-9 6s-7-3-8-5z" fill="none" stroke="#6d737b" stroke-width="2"/></svg>
                <svg class="nav-zoom" width="28" height="28" viewBox="0 0 30 30"><path d="M2 2l19 19M24 2L4 24M2 8V2h6M18 2h6v6M2 18v6h6" fill="none" stroke="#6d737b" stroke-width="2"/><circle cx="21" cy="21" r="5.500" fill="#565c64" stroke="#6d737b" stroke-width="2"/><path d="M25 25l4 4" stroke="#6d737b" stroke-width="2.500"/></svg>
                <i class="nav-arr"></i>
                <svg width="28" height="28" viewBox="0 0 30 30"><path d="M15 1l5 6h-3v22h-4V7h-3z" fill="none" stroke="#6d737b" stroke-width="2"/><ellipse cx="15" cy="21" rx="13" ry="5" fill="none" stroke="#6d737b" stroke-width="2"/></svg>
                <i class="nav-arr"></i>
                <svg width="30" height="30" viewBox="0 0 30 30"><path d="M1 1h8v7H1zM11 1h8v7h-8zM21 1h8v7h-8zM1 11h21v17H1z" fill="none" stroke="#6d737b" stroke-width="1.500"/><path d="M8 15l9 5-9 5z" fill="#6d737b"/></svg>
                <svg class="nav-dot" width="8" height="8"><circle cx="4" cy="4" r="3" fill="none" stroke="#6d737b" stroke-width="1.500"/></svg>
            </div>

            <div class="cmd">
                <div class="cmd-side">
                    <svg width="21" height="7"><path d="M0 0h21M0 4h21" stroke="#d6d9de" stroke-width="2" stroke-dasharray="2 1.500"/></svg>
                    <svg width="14" height="14"><path d="M1 1l12 12M13 1L1 13" stroke="#e5e7ea" stroke-width="2.400"/></svg>
                    <svg width="20" height="20" viewBox="0 0 20 20"><path d="M1 19L11 8c-1-4 2-8 7-7l-4 4 1 2 2 1 3-4c1 5-3 8-7 7L3 20z" fill="#d6d9de"/></svg>
                </div>
                <div class="cmd-main">
                    <div class="cmd-hist">
                        <div>Command:</div>
                        <div>Command:</div>
                    </div>
                    <div class="cmd-input">
                        <svg width="20" height="16" viewBox="0 0 20 16"><path d="M0 0h20v16H0z" fill="#6b6e72"/><path d="M1 3h18v12H1z" fill="#a9abae"/><path d="M3 6l3 2-3 2M7 12h4" fill="none" stroke="#333"/></svg>
                        <svg class="cmd-caret" width="8" height="5"><path d="M0 0h8L4 5z" fill="#4a4d52"/></svg>
                        <span>Type a command</span>
                        <svg class="cmd-up" width="10" height="6"><path d="M5 0l5 6H0z" fill="#4a4d52"/></svg>
                    </div>
                </div>
            </div>
        </div>
        <div class="strip"></div>
    </main>

    <div class="layout-tabs">
        <a class="active" href="#">Model</a>
        <a href="#">Layout1</a>
        <a href="#">Layout2</a>
        <a class="add" href="#">+</a>
    </div>

    <footer class="status">
        <div class="st-group g-model"><span class="model-txt">MODEL</span></div>

        <div class="st-group g-grid">
            <span class="st on"><svg width="20" height="20" viewBox="0 0 20 20"><path d="M0 5h20M0 10h20M0 15h20M5 0v20M10 0v20M15 0v20" stroke="#fff"/></svg></span>
            <span class="st"><svg width="17" height="17" viewBox="0 0 17 17"><path d="M1 2h15M1 8.500h15M1 15h15" stroke="#d6d9de" stroke-width="2.500" stroke-dasharray="2.500 4"/></svg></span>
            <i class="st-arr"></i>
        </div>

        <div class="st-group g-draft">
            <span class="st"><svg width="22" height="20" viewBox="0 0 22 20"><path d="M5 2v10M0 7h10" stroke="#d6d9de" stroke-width="1.400"/><path d="M8 13h13v6H8z" fill="#c0c4ca"/></svg></span>
            <span class="st on"><svg width="20" height="24" viewBox="0 0 20 24"><path d="M1 0v23h19" fill="none" stroke="#fff" stroke-width="1.300"/><path d="M1 15h8v8" fill="none" stroke="#fff"/></svg></span>
            <span class="st"><svg width="20" height="22" viewBox="0 0 20 22"><circle cx="9" cy="12" r="8.500" fill="none" stroke="#b8bcc2"/><path d="M4 17L17 1M4 12h13" stroke="#b8bcc2"/></svg></span>
            <i class="st-arr"></i>
            <span class="st st-gap"><svg width="14" height="24" viewBox="0 0 14 24"><path d="M7 0v24" stroke="#5fb86a" stroke-width="1.400"/><path d="M1 4l12 18" stroke="#d0585c" stroke-width="1.400"/><path d="M5 10h4v4H5z" fill="none" stroke="#e5e7ea"/></svg></span>
            <i class="st-arr"></i>
        </div>

        <div class="st-group g-sel">
            <span class="st narrow"><svg width="20" height="20" viewBox="0 0 20 20"><path d="M1 17L14 3" stroke="#b8bcc2" stroke-width="1.300"/><path d="M0 18h20v2H0z" fill="#8f949b"/></svg></span>
            <span class="st on"><svg width="20" height="24" viewBox="0 0 20 24"><path d="M2 7h16v16H2z" fill="none" stroke="#fff" stroke-width="1.300"/><path d="M0 1h7v6H0z" fill="#5b8fc7" stroke="#fff"/></svg></span>
            <i class="st-arr"></i>
        </div>

        <div class="st-group g-anno">
            <span class="st on"><svg width="24" height="22" viewBox="0 0 24 22"><path d="M9 1l3 9 4 11-7-4-7 4 4-11z" fill="#fff"/><circle cx="19" cy="5" r="3" fill="none" stroke="#fff"/></svg></span>
            <span class="st"><svg width="22" height="22" viewBox="0 0 22 22"><path d="M8 1l3 9 4 11-7-4-7 4 4-11z" fill="#d6d9de"/><path d="M17 1l-3 6h3l-2 5 5-7h-3l2-4z" fill="#d6d9de"/></svg></span>
            <span class="st"><svg class="plain" width="16" height="22" viewBox="0 0 16 22"><path d="M8 1l3 9 4 11-7-4-7 4 4-11z" fill="#d6d9de"/></svg></span>
            <span class="scale">1:1<i class="st-arr tight"></i></span>
        </div>

        <div class="st-group g-gear">
            <span class="st gear-ico"><svg width="20" height="20" viewBox="0 0 20 20"><use href="#gear"/></svg></span>
            <i class="st-arr"></i>
        </div>
        <div class="st-group g-plus"><svg width="20" height="20" viewBox="0 0 20 20"><path d="M10 0v20M0 10h20" stroke="#d6d9de" stroke-width="2.200"/></svg></div>
        <div class="st-group g-shapes"><svg width="20" height="24" viewBox="0 0 20 24"><path d="M1 1h8v8H1zM5 14l5 9H0z" fill="none" stroke="#c0c4ca"/><circle cx="15" cy="9" r="4" fill="none" stroke="#c0c4ca"/></svg></div>
        <div class="st-group g-iso"><svg width="26" height="28" viewBox="0 0 26 28"><path d="M2 4l10-4 12 6v10L2 18z" fill="#2f79c4"/><path d="M8 0v18M2 8l20 2" stroke="#d8ecfb" stroke-width="2"/><path d="M2 18h10v8H2z" fill="#f2c25d"/><path d="M12 22l5 5 8-11" fill="none" stroke="#69c76c" stroke-width="3"/></svg></div>
        <div class="st-group g-menu"><svg width="20" height="20" viewBox="0 0 20 20"><path d="M0 2h20M0 10h20M0 18h20" stroke="#d6d9de" stroke-width="2.200"/></svg></div>
    </footer>

</body>
</html>
```

FILE: styles.css
```css
* {
    box-sizing: border-box;
}
html, body {
    margin: 0;
    padding: 0;
    height: 100%;
}
body {
    position: relative;
    display: flex;
    flex-direction: column;
    height: 1021px;
    overflow: hidden;
    background-color: #222933;
    color: #e4e7ec;
    font-family: "Open Sans", "Noto Sans", sans-serif;
    font-size: 14px;
}
a {
    color: inherit;
    text-decoration: none;
}
svg {
    display: block;
    flex: none;
}
.defs {
    position: absolute;
}

/* application button */
.app-btn {
    position: absolute;
    left: 0;
    top: 0;
    z-index: 5;
    display: block;
    width: 49px;
    height: 49px;
    padding: 1px 0 0 4px;
    background: linear-gradient(#d6d6d6, #8d8d8d);
    box-shadow: 1px 1px 0 #15191f;
}
.app-caret {
    position: absolute;
    right: 3px;
    top: 21px;
    border-left: 4px solid transparent;
    border-right: 4px solid transparent;
    border-top: 5px solid #333;
}

/* title bar */
.titlebar {
    display: flex;
    align-items: center;
    flex: none;
    height: 29px;
    padding-left: 60px;
    background-color: #3b4453;
}
.qa {
    display: flex;
    align-items: center;
    gap: 10px;
}
.qa .tiny {
    margin-left: -2px;
}
.qa .redo {
    margin-left: -2px;
}
.qa .plot {
    margin-left: 1px;
}
.workspace {
    display: flex;
    align-items: center;
    width: 224px;
    height: 26px;
    margin: -3px 0 0 8px;
    padding: 1px 0 0 5px;
    border: 1px solid #2d3440;
    border-top: 0;
    color: #dfe2e6;
    font-size: 14.600px;
}
.ws-gear {
    color: #d6d9de;
    margin-right: 2px;
}
.ws-caret {
    margin-left: auto;
    margin-right: 3px;
}
.ws-more {
    margin-left: 6px;
}
.app-title {
    display: flex;
    gap: 16px;
    margin-left: 160px;
    padding-top: 1px;
    color: #8d95a2;
    font-size: 14.400px;
}
.search-arrow {
    margin-left: 157px;
}
.search {
    width: 224px;
    height: 26px;
    margin: -3px 0 0 6px;
    padding: 4px 0 0 4px;
    border: 1px solid #2d3440;
    border-top: 0;
    color: #aab0ba;
    font-size: 13.400px;
    font-style: italic;
}
.user-tools {
    display: flex;
    align-items: center;
    margin-left: 5px;
}
.user-ico {
    margin-left: 10px;
}
.user-name {
    margin-left: 7px;
    color: #dfe2e6;
}
.caret {
    margin-left: 4px;
}
.cart {
    margin-left: 12px;
}
.a360 {
    margin-left: 12px;
}
.a360 + .caret {
    margin-left: 7px;
}
.tool-sep {
    width: 1px;
    height: 22px;
    margin: 0 12px;
    background-color: #47505f;
}
.help {
    width: 20px;
    height: 20px;
    border-radius: 50%;
    background-color: #e8f0fa;
    color: #2a5fb0;
    font-family: "Liberation Sans", sans-serif;
    font-size: 16px;
    font-weight: bold;
    line-height: 20px;
    text-align: center;
}
.help + .caret {
    margin-left: 10px;
}
.win-btns {
    display: flex;
    align-items: center;
    gap: 15px;
    margin-left: auto;
    padding-right: 4px;
}
.win-min {
    margin-right: 4px;
}

/* ribbon tabs */
.ribbon-tabs {
    display: flex;
    align-items: flex-end;
    flex: none;
    gap: 24.700px;
    height: 25px;
    padding-left: 67px;
    color: #b4bac4;
}
.ribbon-tabs a {
    height: 22px;
    line-height: 21px;
}
.ribbon-tabs a.active {
    margin: 0 -9px 0 -11px;
    padding: 0 11px;
    background-color: #3b4453;
    color: #eef0f3;
}
.tab-opt {
    display: flex;
    align-items: center;
    gap: 6px;
    height: 22px;
    margin-left: 16px;
    padding-bottom: 4px;
}

/* ribbon */
.ribbon {
    display: flex;
    flex: none;
    height: 122px;
}
.panel {
    display: flex;
    flex-direction: column;
    background-color: #3b4453;
    border-right: 1px solid #262d38;
}
.panel-body {
    display: grid;
    flex: none;
    height: 96px;
    padding-top: 4px;
    line-height: 20px;
}
.panel-title {
    position: relative;
    display: flex;
    align-items: center;
    justify-content: center;
    gap: 7px;
    height: 26px;
    padding-top: 5px;
    color: #dfe2e6;
}
.p-props .panel-title {
    padding-right: 14px;
}
.launch {
    position: absolute;
    right: 4px;
    top: 12px;
}
.big {
    display: flex;
    flex-direction: column;
    align-items: center;
    padding-top: 2px;
    white-space: nowrap;
}
.big-ico {
    display: flex;
    align-items: center;
    justify-content: center;
    height: 42px;
    margin-bottom: 4px;
}
.arr {
    display: block;
    margin-top: 3px;
    border-left: 3.500px solid transparent;
    border-right: 3.500px solid transparent;
    border-top: 4px solid #cfd3d9;
}
.arr.sm {
    margin: 0;
}
.title-arr {
    margin: 2px 0 0;
    border-left-width: 4.500px;
    border-right-width: 4.500px;
    border-top-width: 5px;
}
.rows {
    display: grid;
    grid-auto-rows: 31px;
}
.tool {
    display: flex;
    align-items: center;
    gap: 6px;
    white-space: nowrap;
}
.text-a {
    color: #d6d6d6;
    font-family: "Liberation Sans", sans-serif;
    font-size: 48px;
    line-height: 42px;
}

/* panel widths and their columns */
.p-draw {
    width: 278px;
}
.p-draw .panel-body {
    grid-template-columns: 53px 53px 70px 45px 1fr;
}
.p-draw .rows {
    padding-left: 8px;
}
.p-draw .tool {
    gap: 10px;
}
.p-modify {
    width: 271px;
}
.p-modify .panel-body {
    grid-template-columns: 91px 88px 51px 1fr;
    grid-auto-rows: 31px;
    padding-left: 7px;
}
.p-modify .tool {
    gap: 7px;
}
.p-modify .tool .arr {
    margin-left: 4px;
}
.p-anno {
    width: 184px;
}
.p-anno .panel-body {
    grid-template-columns: 61px 70px 1fr;
}
.p-anno .rows {
    padding-left: 9px;
}
.p-anno .tool {
    gap: 11px;
}
.p-layers {
    width: 341px;
}
.p-layers .panel-body {
    grid-template-columns: 78px 259px;
}
.layer-col {
    padding-top: 2px;
}
.combo {
    position: relative;
    display: flex;
    align-items: center;
    height: 27px;
    background-color: #4a5566;
    border: 1px solid #2a313c;
}
.layer-combo {
    height: 26px;
    gap: 6px;
    padding-left: 7px;
}
.layer-combo svg:nth-child(2) {
    margin-left: 1px;
}
.swatch {
    display: block;
    width: 18px;
    height: 18px;
    border: 1px solid #111;
}
.swatch.red {
    background-color: #ff0000;
}
.swatch.wide {
    width: 20px;
    height: 20px;
    margin-left: 13px;
    border-color: #c9a0a0;
}
.combo-text {
    margin-left: 2px;
}
.combo-arr {
    position: absolute;
    right: 3px;
    top: 10px;
    border-left: 5px solid transparent;
    border-right: 5px solid transparent;
    border-top: 6px solid #c6cad0;
}
.icon-row {
    display: flex;
    align-items: center;
    gap: 10px;
    height: 31px;
    padding-left: 4px;
}
.icon-row:nth-child(2) {
    margin-top: 3px;
}
.p-block {
    width: 100px;
}
.p-block .panel-body {
    grid-template-columns: 54px 1fr;
}
.block-rows {
    padding-left: 2px;
}
.block-rows .tool {
    gap: 9px;
}
.p-props {
    width: 278px;
}
.p-props .panel-body {
    grid-template-columns: 79px 25px 169px;
}
.prop-icons {
    display: flex;
    flex-direction: column;
    gap: 11px;
    padding-top: 9px;
}
.prop-combos {
    display: flex;
    flex-direction: column;
    gap: 3px;
    padding-top: 2px;
}
.prop-combos .combo-text {
    margin-left: 11px;
}
.prop-combos .combo:nth-child(n+2) .combo-text {
    margin-left: 3px;
}
.combo-line {
    width: 79px;
    height: 1px;
    margin-left: 3px;
    background-color: #e8eaee;
}
.p-groups {
    width: 84px;
}
.p-groups .panel-body {
    grid-template-columns: 52px 1fr;
}
.p-groups .rows {
    padding-left: 3px;
}
.p-utils {
    width: 121px;
}
.p-utils .panel-body {
    grid-template-columns: 90px 1fr;
}
.p-utils .rows {
    padding-left: 2px;
}
.p-clip {
    width: 99px;
}
.p-clip .panel-body {
    grid-template-columns: 68px 1fr;
}
.p-clip .rows {
    padding-left: 2px;
}
.p-view {
    width: 79px;
}
.p-view .panel-title {
    justify-content: flex-start;
    padding-left: 7px;
}
.p-touch {
    width: 54px;
    border-right: 0;
}

/* document tabs */
.doc-tabs {
    display: flex;
    align-items: flex-end;
    flex: none;
    height: 33px;
    padding-left: 18px;
    gap: 0;
}
.doc-tab {
    position: relative;
    width: 165px;
    height: 28px;
    margin-right: -6px;
    padding-left: 21px;
    background-color: #2c3440;
    clip-path: path("M0 28C7 28 7 0 18 0H147C158 0 158 28 165 28Z");
    color: #aab0ba;
    line-height: 29px;
}
.doc-tab.current {
    padding-left: 16px;
    background-color: #3b4453;
    color: #e4e7ec;
}
.doc-close {
    position: absolute;
    right: 24px;
    top: 0;
    color: #c6cad0;
    font-family: "DejaVu Sans", sans-serif;
    font-size: 15px;
    font-weight: bold;
}
.doc-add {
    width: 26px;
    height: 22px;
    margin: 0 0 3px 8px;
    border-radius: 6px;
    background-color: #2c3440;
    color: #b8bcc2;
    font-size: 18px;
    font-weight: bold;
    line-height: 22px;
    text-align: center;
}
.doc-band {
    flex: none;
    height: 5px;
    background-color: #3b4453;
}

/* work area */
.workarea {
    display: flex;
    flex: none;
    height: 746px;
}
.canvas {
    position: relative;
    width: 1909px;
    background-color: #212830;
    overflow: hidden;
}
.strip {
    width: 10px;
    background-color: #d8e5f3;
}
.drawing {
    position: absolute;
    left: 0;
    top: 0;
}
.sph-front {
    stroke: #ffffff;
    stroke-width: 1.200;
}
.sph-back {
    stroke: #e6d3d3;
    stroke-width: 1;
    opacity: .85;
}
.ucs {
    font-family: "Liberation Sans", sans-serif;
    font-size: 21px;
}
.ucs.z {
    fill: #4f87dc;
}
.ucs.y {
    fill: #4ea043;
}
.ucs.x {
    fill: #d9555a;
}
.compass {
    fill: #9ca0a6;
    font-family: "Liberation Sans", sans-serif;
    font-size: 16px;
    font-weight: bold;
}
.vc-face {
    fill: #54585d;
    font-family: "Liberation Sans", sans-serif;
    font-size: 13px;
    font-weight: bold;
}
.vc-top {
    fill: #54585d;
    font-family: "Liberation Sans", sans-serif;
    font-size: 10px;
    font-weight: bold;
}
.view-label {
    position: absolute;
    left: 3px;
    top: 6px;
    color: #d5d9e0;
    letter-spacing: .3px;
    line-height: 20px;
}
.view-btns {
    position: absolute;
    left: 1835px;
    top: 10px;
    display: flex;
    align-items: center;
    gap: 12px;
}
.view-name {
    position: absolute;
    left: 1780px;
    top: 208px;
    display: flex;
    align-items: center;
    gap: 7px;
    width: 82px;
    height: 20px;
    padding-left: 5px;
    border-radius: 4px;
    background-color: #676d78;
    color: #969ba4;
    font-size: 13px;
}
.navbar {
    position: absolute;
    left: 1865px;
    top: 258px;
    display: flex;
    flex-direction: column;
    align-items: center;
    width: 40px;
    height: 259px;
    padding-top: 1px;
    border-radius: 4px;
    background-color: #565c64;
}
.nav-dot {
    align-self: flex-end;
    margin: 3px 3px 3px 0;
}
.nav-first {
    margin-top: 7px;
}
.nav-arr {
    margin: 9px 0 8px;
    border-left: 3px solid transparent;
    border-right: 3px solid transparent;
    border-top: 4px solid #6d737b;
}
.nav-zoom {
    margin-top: 6px;
}
.navbar .nav-dot:last-child {
    margin-top: auto;
}

/* command line */
.cmd {
    position: absolute;
    left: 50px;
    top: 677px;
    display: flex;
    width: 1820px;
    height: 69px;
}
.cmd-side {
    display: flex;
    flex-direction: column;
    align-items: center;
    flex: none;
    width: 31px;
    padding-top: 6px;
    gap: 11px;
    background-color: #323a45;
}
.cmd-main {
    display: flex;
    flex-direction: column;
    flex: 1;
    color: #111;
    font-family: "DejaVu Sans Mono", monospace;
    font-size: 14px;
    letter-spacing: .3px;
}
.cmd-hist {
    flex: none;
    height: 44px;
    padding: 4px 0 0 3px;
    border-bottom: 1px solid #1c2229;
    background: linear-gradient(rgba(165, 167, 169, .93), rgba(146, 148, 150, .9));
    line-height: 19px;
}
.cmd-input {
    display: flex;
    align-items: center;
    flex: 1;
    padding-left: 6px;
    background-color: rgba(190, 192, 194, .94);
    color: #6a6d71;
    font-style: italic;
}
.cmd-caret {
    margin: 0 7px 0 3px;
}
.cmd-up {
    margin-left: auto;
    margin-right: 5px;
}

/* layout tabs */
.layout-tabs {
    display: flex;
    align-items: flex-start;
    flex: none;
    gap: 4px;
    height: 28px;
    padding-left: 16px;
    color: #c6cad0;
}
.layout-tabs a {
    width: 78px;
    height: 23px;
    background-color: #2c3440;
    clip-path: polygon(0 0, 100% 0, calc(100% - 7px) 100%, 7px 100%);
    line-height: 23px;
    text-align: center;
}
.layout-tabs a.active {
    width: 68px;
    background-color: #3b4453;
    color: #fff;
    font-weight: bold;
}
.layout-tabs a.add {
    width: 25px;
    margin-left: 3px;
    font-size: 18px;
    font-weight: bold;
}

/* status bar */
.status {
    display: flex;
    align-items: flex-start;
    justify-content: flex-end;
    flex: none;
    height: 33px;
    border-bottom: 2px solid #3f4650;
}
.st-group {
    display: flex;
    align-items: center;
    height: 30px;
    background-color: #3b4453;
}
.st {
    display: flex;
    align-items: center;
    justify-content: center;
    width: 29px;
    height: 30px;
}
.st.on {
    background-color: #5b8fc7;
}
.st-arr {
    display: block;
    flex: none;
    margin: 0 6px;
    border-left: 4px solid transparent;
    border-right: 4px solid transparent;
    border-top: 6px solid #cfd3d9;
}
.st-arr.tight {
    margin: 0 0 0 4px;
}
.g-model {
    width: 58px;
    margin-right: 4px;
    justify-content: center;
}
.model-txt {
    color: #eef0f3;
    font-size: 14px;
}
.g-grid {
    width: 79px;
    margin-right: 3px;
}
.g-draft {
    width: 159px;
    margin-right: 1px;
}
.g-sel {
    width: 79px;
    margin-right: 3px;
}
.g-anno {
    width: 131px;
    margin-right: 3px;
}
.scale {
    display: flex;
    align-items: center;
    margin-left: 6px;
    color: #d6d9de;
    font-size: 14px;
}
.g-gear {
    width: 50px;
    margin-right: 1px;
    color: #d6d9de;
}
.g-plus {
    justify-content: center;
    width: 29px;
    margin-right: 3px;
}
.g-shapes {
    justify-content: center;
    width: 31px;
    margin-right: 3px;
}
.g-iso {
    justify-content: center;
    width: 34px;
    margin-right: 3px;
}
.g-menu {
    justify-content: center;
    width: 30px;
}
```
